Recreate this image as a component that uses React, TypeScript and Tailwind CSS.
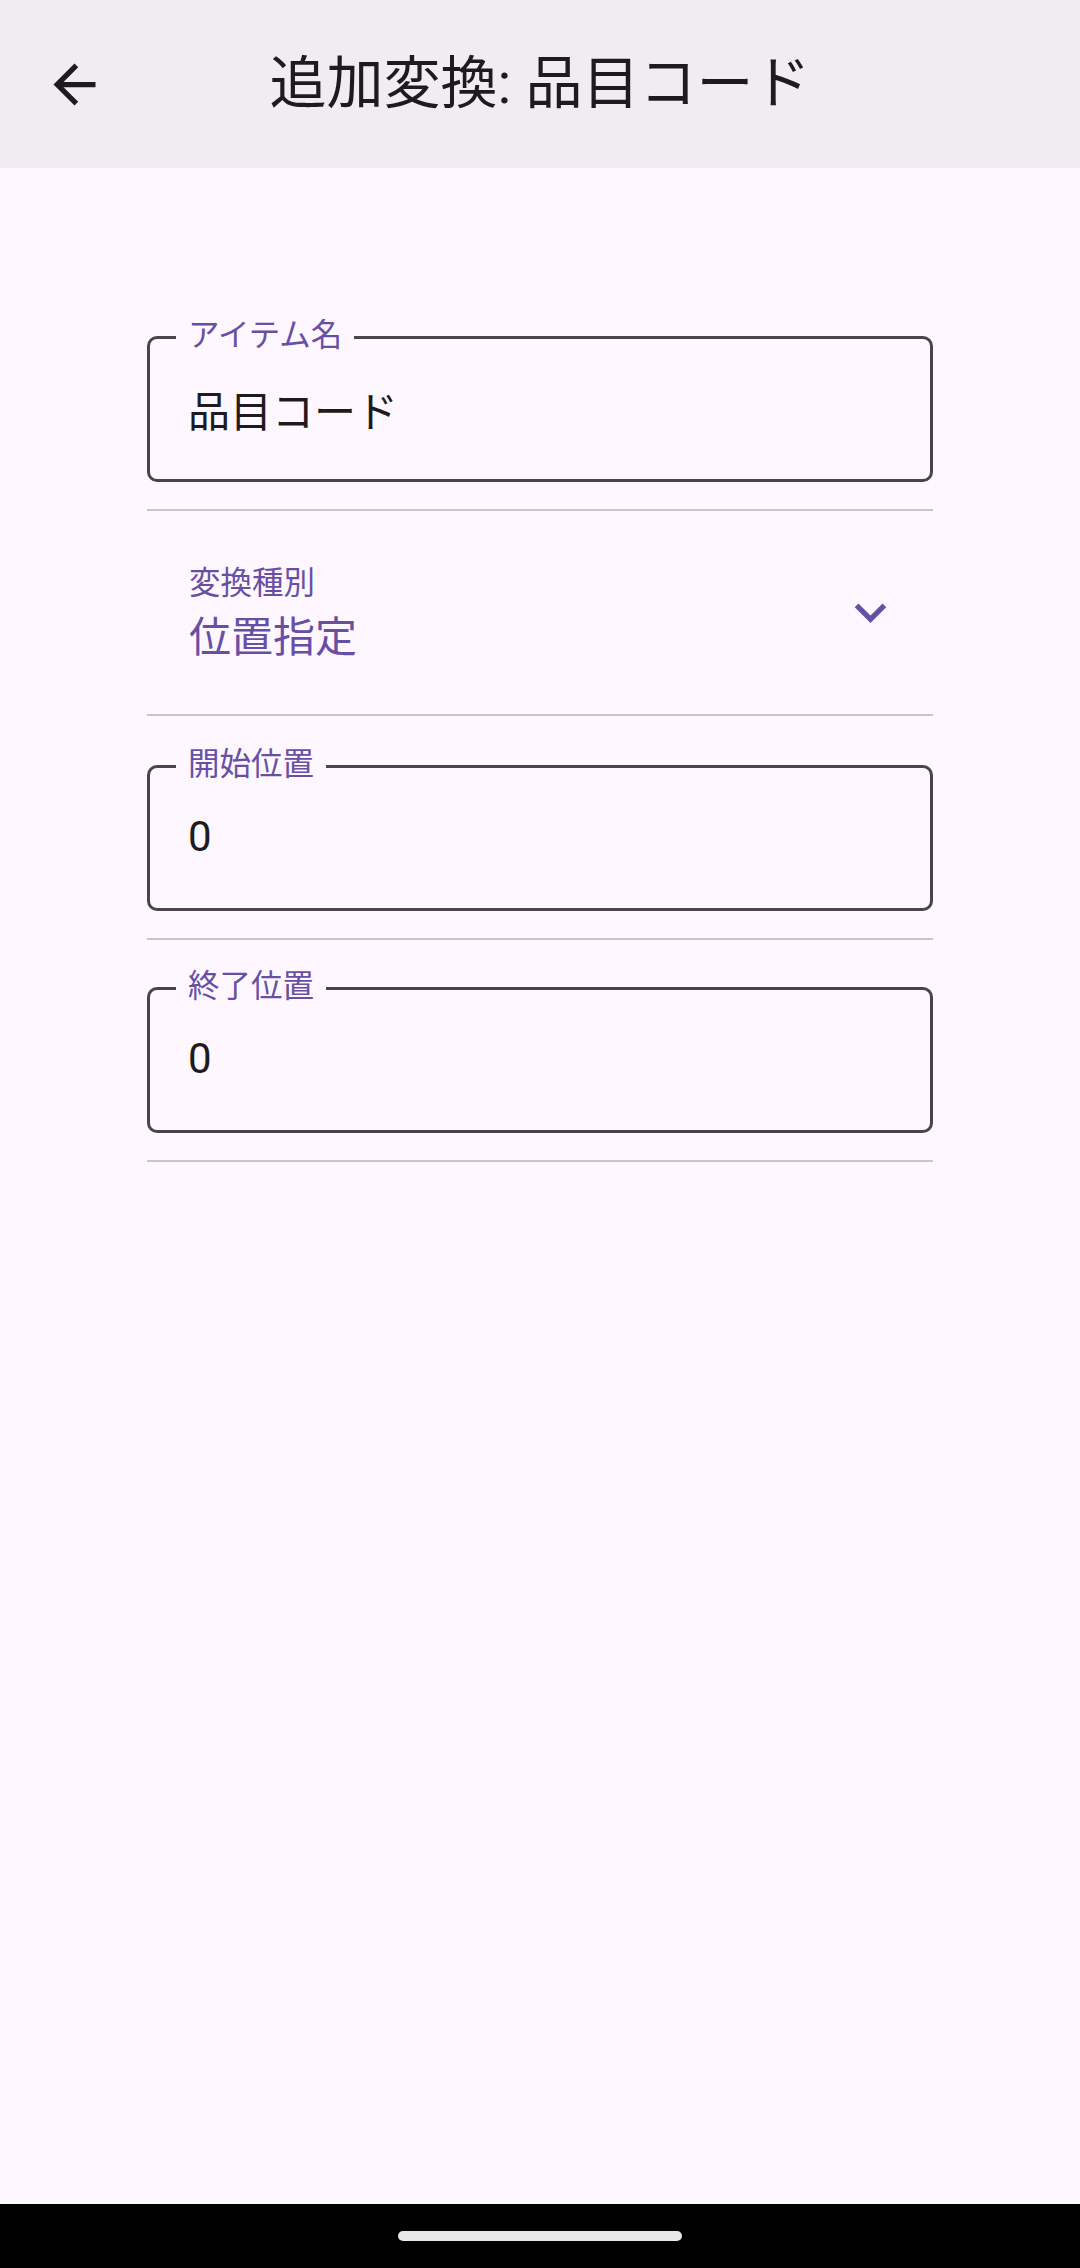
function BackArrow() {
  return (
    <svg viewBox="0 0 24 24" className="h-[63px] w-[63px] fill-[#1d1b20]">
      <path d="M20 11H7.83l5.59-5.59L12 4l-8 8 8 8 1.41-1.41L7.83 13H20v-2z" />
    </svg>
  )
}

function ExpandMore() {
  return (
    <svg viewBox="0 0 24 24" className="h-[63px] w-[63px] fill-[#6750a4]">
      <path d="M16.59 8.59L12 13.17 7.41 8.59 6 10l6 6 6-6z" />
    </svg>
  )
}

function OutlinedField({
  label,
  value,
  numeric = false,
}: {
  label: string
  value: string
  numeric?: boolean
}) {
  return (
    <div className="relative flex h-[146px] items-center rounded-[10px] border-[3px] border-[#49454f] pl-[38px]">
      {/* notched label */}
      <span className="absolute left-[26px] top-[-19px] bg-[#fef7ff] px-[12px] text-[31.5px] leading-[32px] text-[#6750a4]">
        {label}
      </span>
      <span
        className={
          numeric
            ? 'pb-[2px] text-[42px] leading-[56px] text-[#1d1b20]'
            : 'pt-[8px] text-[42px] leading-[56px] text-[#1d1b20]'
        }
      >
        {value}
      </span>
    </div>
  )
}

function Divider() {
  return <div className="h-[2px] w-full bg-[#cac4d0]" />
}

export default function App() {
  return (
    <div className="flex h-[2268px] w-[1080px] flex-col bg-[#fef7ff] font-['Roboto','Noto_Sans_CJK_JP',sans-serif]">
      {/* top app bar */}
      <header className="flex h-[168px] items-center bg-[#f0ecf2]">
        <div className="flex w-[126px] justify-start pl-[43px]">
          <BackArrow />
        </div>
        <h1 className="flex-1 text-center text-[57px] font-normal leading-[72px] text-[#1d1b20]">
          追加変換: 品目コード
        </h1>
        <div className="w-[126px]" />
      </header>

      <main className="flex flex-1 flex-col items-center">
        <div className="mt-[168px] flex w-[786px] flex-col">
          <OutlinedField label="アイテム名" value="品目コード" />
          <div className="mt-[27px]">
            <Divider />
          </div>

          {/* dropdown */}
          <div className="flex h-[203px] items-center justify-between pl-[42px] pr-[31px]">
            <div className="flex flex-col pt-[4px]">
              <span className="text-[31.5px] leading-[40px] text-[#6750a4]">変換種別</span>
              <span className="mt-[6px] text-[42px] leading-[56px] text-[#6750a4]">位置指定</span>
            </div>
            <ExpandMore />
          </div>
          <Divider />

          <div className="mt-[49px]">
            <OutlinedField label="開始位置" value="0" numeric />
          </div>
          <div className="mt-[27px]">
            <Divider />
          </div>

          <div className="mt-[47px]">
            <OutlinedField label="終了位置" value="0" numeric />
          </div>
          <div className="mt-[27px]">
            <Divider />
          </div>
        </div>
      </main>

      {/* gesture nav bar */}
      <div className="flex h-[64px] items-center justify-center bg-black">
        <div className="h-[10px] w-[284px] rounded-full bg-[#e8e8e8]" />
      </div>
    </div>
  )
}
